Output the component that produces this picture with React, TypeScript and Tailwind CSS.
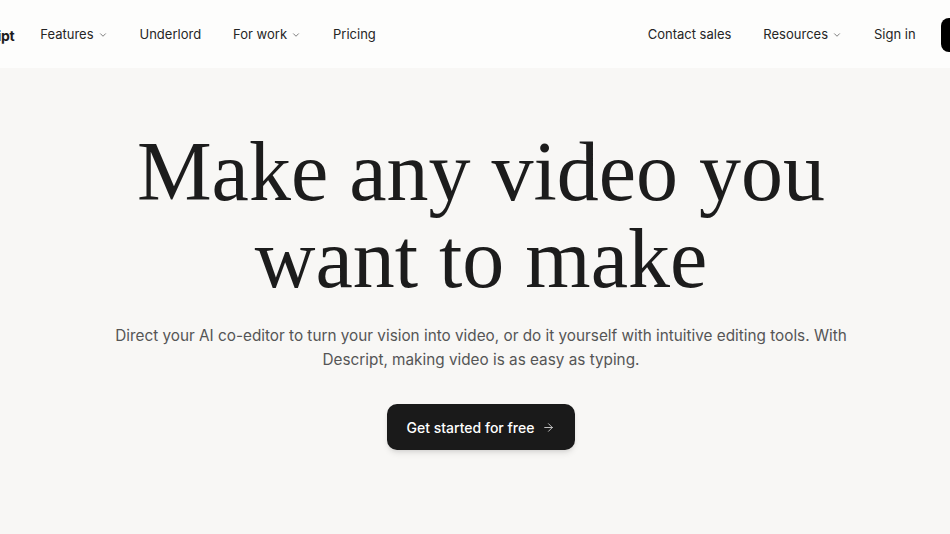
import { ChevronDown, ArrowRight } from 'lucide-react';

const leftLinks = [
  { label: 'Features', menu: true },
  { label: 'Underlord', menu: false },
  { label: 'For work', menu: true },
  { label: 'Pricing', menu: false },
];

const rightLinks = [
  { label: 'Contact sales', menu: false },
  { label: 'Resources', menu: true },
  { label: 'Sign in', menu: false },
];

const NavLink = ({ label, menu }: { label: string; menu: boolean }) => (
  <a href="#" className="flex items-center gap-[2px] text-[13px] text-[#252525]">
    {label}
    {menu && <ChevronDown className="w-[10px] h-[10px] text-[#666] ml-[2px]" strokeWidth={2} />}
  </a>
);

const App = () => {
  return (
    <div
      className="min-h-screen bg-[#f8f7f5] text-[#1c1c1c]"
      style={{ fontFamily: 'Inter, "Noto Sans", sans-serif' }}
    >
      <header className="h-[68px] bg-[#fdfdfc] overflow-hidden">
        <div className="h-full pt-[2px] flex items-center justify-between -ml-[41px] -mr-[92px]">
          <div className="flex items-center gap-8">
            <span className="text-[14px] font-bold tracking-tight mr-[-6px]">Descript</span>
            {leftLinks.map(link => (
              <NavLink key={link.label} {...link} />
            ))}
          </div>
          <div className="flex items-center gap-8">
            {rightLinks.map(link => (
              <NavLink key={link.label} {...link} />
            ))}
            <a
              href="#"
              className="h-[34px] px-4 flex items-center rounded-lg bg-black text-white text-[13px] font-medium -ml-[7px]"
            >
              Get started
            </a>
          </div>
        </div>
      </header>

      <main className="flex flex-col items-center pt-[60px] pb-20 pl-[12px]">
        <h1
          className="text-[84px] leading-[87px] text-center text-[#1c1c1c]"
          style={{ fontFamily: '"Liberation Serif", "Times New Roman", serif' }}
        >
          Make any video you
          <br />
          want to make
        </h1>
        <p className="mt-[22px] max-w-[740px] text-center text-[15.3px] leading-[24px] text-[#555]">
          Direct your AI co-editor to turn your vision into video, or do it yourself with intuitive
          editing tools. With Descript, making video is as easy as typing.
        </p>
        <a
          href="#"
          className="mt-[32px] h-[46px] w-[188px] flex items-center justify-center gap-2 rounded-[10px] bg-[#1a1a1a] text-white text-[14px] font-medium shadow-md"
        >
          Get started for free
          <ArrowRight className="w-[13px] h-[13px] text-[#ccc]" strokeWidth={1.75} />
        </a>
      </main>
    </div>
  );
};

export default App;
